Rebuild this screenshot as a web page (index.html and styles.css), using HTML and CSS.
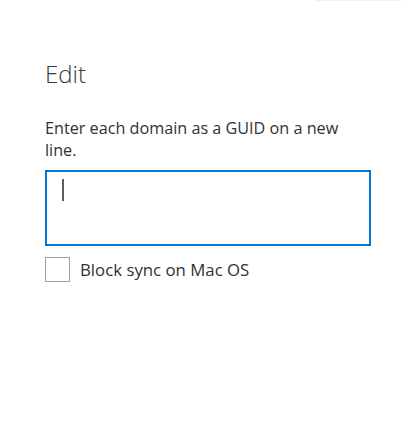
FILE: index.html
```html
<!DOCTYPE html>
<html>
<head>
<meta charset="utf-8">
<link rel="stylesheet" href="styles.css">
</head>
<body>
<div class="topline"></div>
<main class="panel">
  <h1 class="title">Edit</h1>
  <p class="label">Enter each domain as a GUID on a new line.</p>
  <div class="textbox"><span class="caret"></span></div>
  <label class="check">
    <span class="box"></span>
    <span class="check-text">Block sync on Mac OS</span>
  </label>
</main>
</body>
</html>
```
FILE: styles.css
```css
html, body {
  margin: 0;
  padding: 0;
  background: #ffffff;
}
body {
  width: 402px;
  height: 436px;
  overflow: hidden;
  font-family: "Open Sans", "Noto Sans", sans-serif;
  color: #323130;
  position: relative;
}
.topline {
  position: absolute;
  top: 0;
  left: 315px;
  right: 0;
  height: 1px;
  background: #efefef;
}
.panel {
  padding: 56px 31px 0 45px;
  display: flex;
  flex-direction: column;
}
.title {
  margin: 0;
  font-weight: 300;
  font-size: 24px;
  line-height: 36px;
  color: #3b3a39;
}
.label {
  margin: 25px 0 0 0;
  max-width: 315px;
  font-size: 16.2px;
  line-height: 22px;
  color: #323130;
}
.textbox {
  margin-top: 9px;
  border: 2px solid #0078d4;
  padding: 7px 0 0 15px;
  box-sizing: content-box;
  height: 65px;
}
.caret {
  display: block;
  width: 2px;
  height: 22px;
  background: #605e5c;
}
.check {
  margin-top: 11px;
  display: flex;
  align-items: center;
  gap: 10px;
}
.box {
  width: 23px;
  height: 23px;
  border: 1px solid #a19f9d;
  flex: none;
}
.check-text {
  font-size: 16.8px;
  line-height: 25px;
  color: #323130;
}
```
